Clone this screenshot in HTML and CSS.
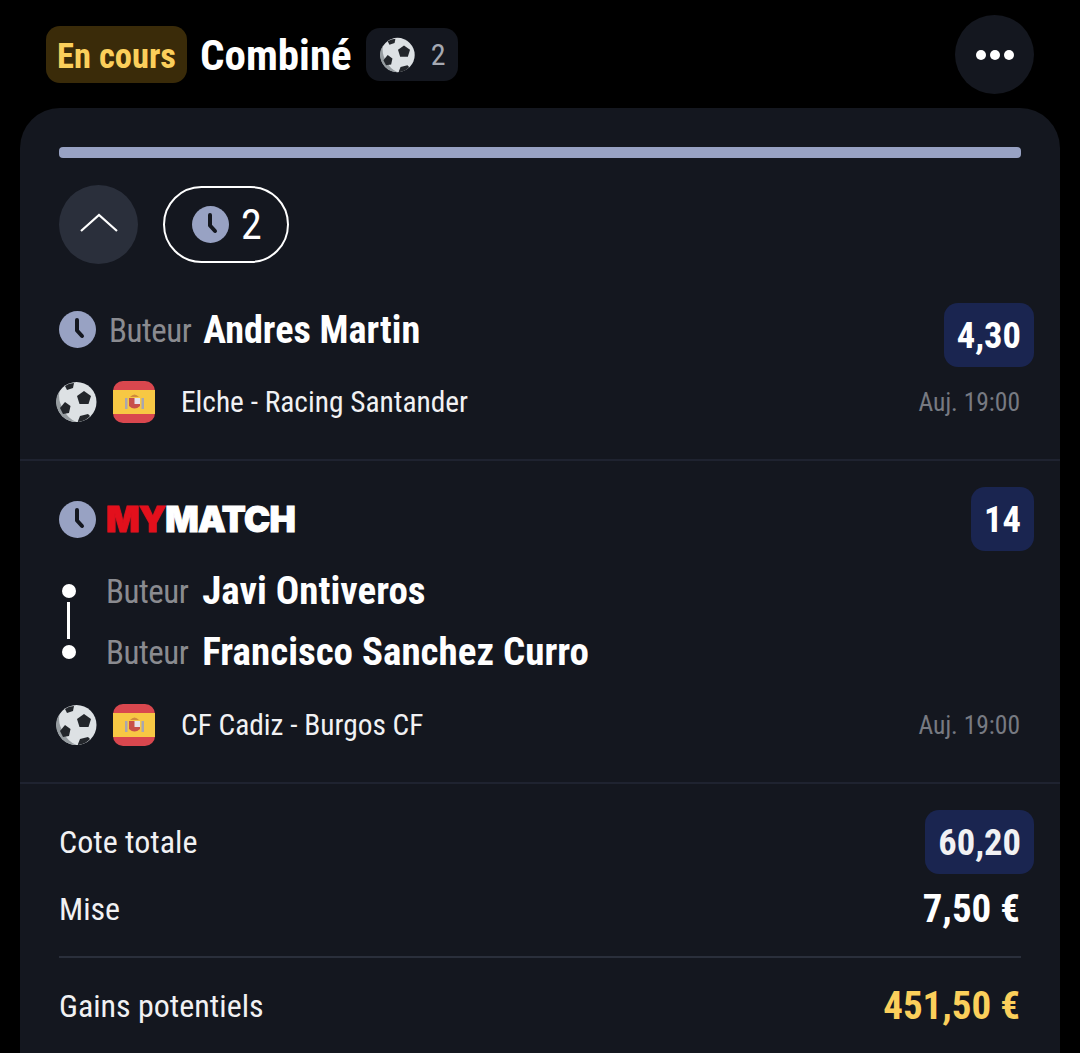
FILE: index.html
```html
<!DOCTYPE html>
<html lang="fr">

<head>
    <meta charset="UTF-8">
    <title>Combiné</title>
    <link rel="stylesheet" href="styles.css">
</head>

<body>
    <svg class="defs" width="0" height="0">
        <defs>
            <symbol id="ball" viewBox="0 0 42 42">
                <circle cx="20.5" cy="21" r="20" fill="#dde1e4"></circle>
                <path d="M3.5 10 A20 20 0 0 0 20.5 41 A22 22 0 0 1 8 29 A24 24 0 0 1 3.5 10Z" fill="#969ca0"></path>
                <path d="M28 10 L35 15 L32.5 23 L23.5 23 L21 15Z" fill="#23262b"></path>
                <path d="M9 21 L14.5 25 L13 32 L7 33 L4 27Z" fill="#23262b"></path>
                <path d="M9 5 Q13 2 18 2 L17 7 L11 9Z" fill="#23262b"></path>
                <path d="M22 40 L24 35 L32 33 L34 35 Q30 40 22 41Z" fill="#23262b"></path>
            </symbol>
            <symbol id="flag" viewBox="0 0 42 42">
                <rect width="42" height="42" rx="10" fill="#d9474e"></rect>
                <rect y="9" width="42" height="24" fill="#f7c844"></rect>
                <rect x="12" y="17" width="2.5" height="11" fill="#a9a6b0"></rect>
                <rect x="28.5" y="17" width="2.5" height="11" fill="#a9a6b0"></rect>
                <path d="M16 17 H27 V25 Q21.5 30 16 25Z" fill="#c8504a"></path>
                <rect x="21.5" y="17" width="5.5" height="6" fill="#e6e2ea"></rect>
                <path d="M17 16 Q21.5 11 26 16Z" fill="#d08a3c"></path>
            </symbol>
            <symbol id="clock" viewBox="0 0 37 37">
                <circle cx="18.5" cy="18.5" r="18.5" fill="#98a2c3"></circle>
                <path d="M18 9 V19.5 L23 25" fill="none" stroke="#14171f" stroke-width="4" stroke-linecap="round" stroke-linejoin="round"></path>
            </symbol>
        </defs>
    </svg>

    <header class="top">
        <span class="status">En cours</span>
        <h1 class="title">Combiné</h1>
        <span class="sport-count">
            <svg class="ball-small"><use href="#ball"></use></svg>
            <span>2</span>
        </span>
        <button class="more"><i></i><i></i><i></i></button>
    </header>

    <main class="card">
        <div class="progress"></div>

        <div class="controls">
            <button class="collapse">
                <svg width="38" height="20" viewBox="0 0 38 20">
                    <path d="M1 18 L19 2 L37 18" fill="none" stroke="#fff" stroke-width="2.2"></path>
                </svg>
            </button>
            <div class="pending">
                <svg class="clock-pill"><use href="#clock"></use></svg>
                <span>2</span>
            </div>
        </div>

        <section class="bet bet-first">
            <div class="bet-head">
                <svg class="clock"><use href="#clock"></use></svg>
                <span class="market">Buteur</span>
                <strong class="player">Andres Martin</strong>
                <span class="odds">4,30</span>
            </div>
            <div class="match">
                <svg class="ball"><use href="#ball"></use></svg>
                <svg class="flag"><use href="#flag"></use></svg>
                <span class="teams">Elche - Racing Santander</span>
                <span class="when">Auj. 19:00</span>
            </div>
        </section>

        <section class="bet bet-second">
            <div class="mymatch-head">
                <svg class="clock"><use href="#clock"></use></svg>
                <span class="logo"><b>MY</b>MATCH</span>
                <span class="odds">14</span>
            </div>
            <div class="legs">
                <div class="leg">
                    <span class="dot"></span>
                    <span class="market">Buteur</span>
                    <strong class="player">Javi Ontiveros</strong>
                </div>
                <div class="leg">
                    <span class="dot"></span>
                    <span class="market">Buteur</span>
                    <strong class="player">Francisco Sanchez Curro</strong>
                </div>
            </div>
            <div class="match">
                <svg class="ball"><use href="#ball"></use></svg>
                <svg class="flag"><use href="#flag"></use></svg>
                <span class="teams">CF Cadiz - Burgos CF</span>
                <span class="when">Auj. 19:00</span>
            </div>
        </section>

        <section class="totals">
            <div class="total-row row-cote">
                <span>Cote totale</span>
                <span class="odds">60,20</span>
            </div>
            <div class="total-row row-mise">
                <span>Mise</span>
                <strong>7,50 €</strong>
            </div>
            <div class="total-row row-gains">
                <span>Gains potentiels</span>
                <strong class="gain">451,50 €</strong>
            </div>
        </section>
    </main>
</body>

</html>
```

FILE: styles.css
```css
* {
    box-sizing: border-box;
}

html,
body {
    height: 1053px;
    overflow: hidden;
}

body {
    margin: 0;
    background: #000;
    color: #fff;
    font-family: "Roboto", "Liberation Sans", sans-serif;
    font-stretch: 75%;
}

.defs {
    display: block;
    height: 0;
}

button {
    border: 0;
    padding: 0;
    color: inherit;
}

/* header */

.top {
    height: 108px;
    padding: 15px 46px 14px 46px;
    display: flex;
    align-items: center;
}

.status {
    height: 57px;
    width: 141px;
    padding-top: 2px;
    border-radius: 14px;
    background: #3a2b09;
    color: #fbcf5b;
    font-size: 34.5px;
    font-weight: 700;
    display: flex;
    align-items: center;
    justify-content: center;
}

.title {
    margin: 0 14px 0 13px;
    font-size: 43px;
    font-weight: 700;
}

.sport-count {
    height: 53px;
    width: 92px;
    border-radius: 14px;
    background: #14171f;
    color: #a6a9b2;
    font-size: 30px;
    display: flex;
    align-items: center;
    gap: 15px;
    padding-left: 14px;
}

.ball-small {
    width: 36px;
    height: 36px;
}

.more {
    margin-left: auto;
    width: 79px;
    height: 79px;
    border-radius: 50%;
    background: #14171f;
    display: flex;
    align-items: center;
    justify-content: center;
    gap: 4px;
}

.more i {
    width: 10px;
    height: 10px;
    border-radius: 50%;
    background: #fff;
}

/* card */

.card {
    margin: 0 20px;
    height: 960px;
    padding-top: 39px;
    border-radius: 40px 40px 0 0;
    background: #14171f;
}

.progress {
    margin: 0 39px;
    height: 11px;
    border-radius: 4px;
    background: #98a2c3;
}

.controls {
    margin: 27px 39px 0;
    display: flex;
    align-items: center;
    gap: 25px;
}

.collapse {
    width: 79px;
    height: 79px;
    padding-bottom: 4px;
    border-radius: 50%;
    background: #2a2f3b;
    display: flex;
    align-items: center;
    justify-content: center;
}

.pending {
    width: 126px;
    height: 77px;
    border: 2px solid #fff;
    border-radius: 39px;
    font-size: 42px;
    display: flex;
    align-items: center;
    gap: 12px;
    padding-left: 27px;
}

.clock-pill {
    width: 37px;
    height: 37px;
}

.bet {
    border-bottom: 2px solid #1f2330;
    padding: 0 26px 0 39px;
}

.bet-first {
    height: 197px;
    padding-top: 39px;
}

.bet-second {
    height: 323px;
    padding-top: 26px;
}

.bet-head,
.mymatch-head {
    display: flex;
    align-items: center;
    height: 64px;
}

.clock {
    width: 37px;
    height: 37px;
    flex: none;
}

.bet-head .clock {
    margin-top: -12px;
}

.market {
    color: #8a8b90;
    font-size: 33px;
    letter-spacing: -.5px;
}

.bet-head .market {
    margin: -10px 12px 0 13px;
}

.player {
    font-size: 39px;
    font-weight: 700;
}

.bet-head .player {
    margin-top: -10px;
    font-size: 38.2px;
}

.odds {
    margin-left: auto;
    height: 64px;
    padding: 1px 13px 0;
    border-radius: 14px;
    background: #1a2550;
    font-size: 36.5px;
    font-weight: 700;
    display: flex;
    align-items: center;
    justify-content: center;
}

.match {
    margin: 14px 14px 0 -3px;
    height: 42px;
    display: flex;
    align-items: center;
}

.ball,
.flag {
    width: 42px;
    height: 42px;
}

.flag {
    margin-left: 15px;
}

.teams {
    margin-left: 26px;
    font-size: 29.4px;
    color: #f1f1f3;
}

.when {
    margin-left: auto;
    font-size: 25.5px;
    color: #777a82;
}

.logo {
    margin-left: 10px;
    font-family: "Inter", "Liberation Sans", sans-serif;
    font-stretch: 100%;
    font-size: 35px;
    font-weight: 900;
    letter-spacing: -.7px;
    -webkit-text-stroke: 1px #fff;
}

.logo b {
    color: #e3101c;
    font-weight: 900;
    -webkit-text-stroke: 1px #e3101c;
}

.legs {
    margin-top: 18px;
    display: grid;
    row-gap: 17px;
    position: relative;
}

.legs::before {
    content: "";
    position: absolute;
    left: 8px;
    top: 33px;
    height: 37px;
    width: 3px;
    background: #fff;
}

.leg {
    height: 44px;
    display: flex;
    align-items: center;
}

.dot {
    width: 14px;
    height: 14px;
    margin: 0 30px 0 3px;
    border-radius: 50%;
    background: #fff;
}

.leg .market {
    margin-right: 14px;
}

.bet-second .match {
    margin-top: 30px;
}

/* totals */

.totals {
    padding: 26px 26px 0 39px;
}

.total-row {
    display: flex;
    align-items: center;
    justify-content: space-between;
    font-size: 32px;
    color: #f1f1f3;
}

.row-cote {
    height: 64px;
}

.row-mise {
    margin: 3px 13px 0 0;
    height: 81px;
    padding-bottom: 15px;
    border-bottom: 2px solid #2a2f3b;
}

.row-mise strong,
.row-gains strong {
    font-size: 39px;
    color: #fff;
    margin-right: 1px;
}

.row-gains {
    margin: 23px 13px 0 0;
    height: 50px;
}

.row-gains .gain {
    color: #fbcf5b;
}
```
